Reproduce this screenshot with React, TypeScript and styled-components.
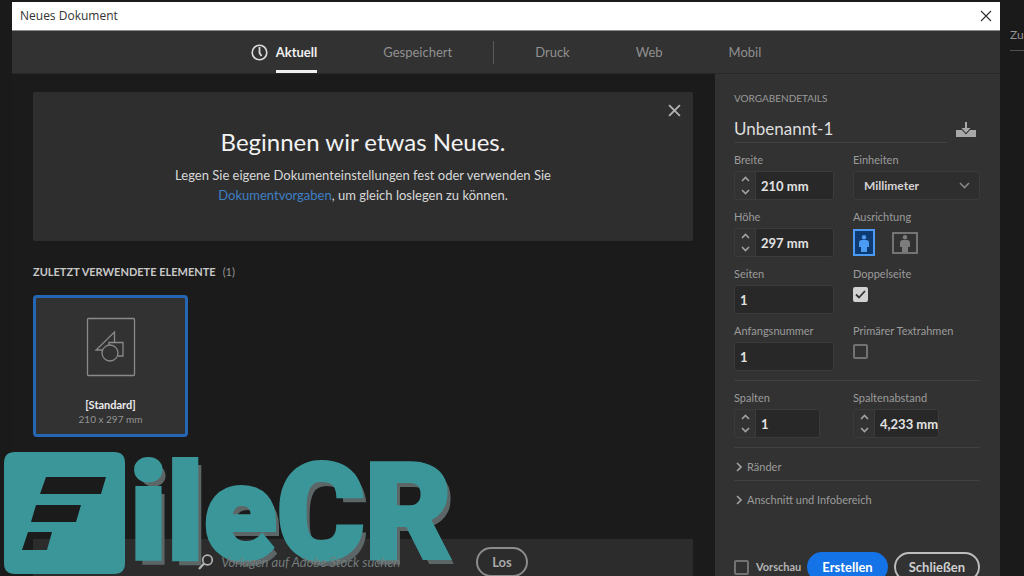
import React from "react";
import styled, { createGlobalStyle } from "styled-components";

const GlobalStyle = createGlobalStyle`
  * { box-sizing: border-box; }
  body {
    margin: 0;
    background: #1a1a1a;
    color: #d8d8d8;
    font-family: Lato, "Liberation Sans", sans-serif;
    font-size: 12px;
    line-height: 16px;
  }
  button, input, select { font: inherit; color: inherit; }
  button { cursor: pointer; }
  svg { display: block; flex: none; }
`;

const Page = styled.div`
  position: relative;
  display: flex;
  align-items: flex-start;
  height: 100vh;
  overflow: hidden;
  padding: 2px 0 0 12px;
`;

const Dialog = styled.section`
  flex: 1;
  min-width: 0;
  background: #1b1b1b;
`;

const Backdrop = styled.aside`
  width: 24px;
  padding: 25px 0 0 10px;
  overflow: hidden;
`;

const BackdropItem = styled.div`
  padding-bottom: 7px;
  border-bottom: 1px solid #505050;
  color: #949494;
  white-space: nowrap;
`;

const TitleBar = styled.header`
  display: flex;
  align-items: center;
  justify-content: space-between;
  height: 29px;
  padding: 0 8px;
  border-bottom: 1px solid #8a8a8a;
  background: #fff;
  color: #333;
`;

const WindowTitle = styled.h1`
  margin: 0;
  font: 400 12px/16px "Open Sans", sans-serif;
`;

const IconButton = styled.button`
  display: flex;
  align-items: center;
  justify-content: center;
  padding: 0;
  border: 0;
  background: none;
`;

const Tabs = styled.nav`
  display: flex;
  align-items: stretch;
  justify-content: center;
  gap: 66px;
  height: 43px;
  border-bottom: 1px solid #272727;
  background: #323232;
`;

const TabGroup = styled.div`
  display: flex;
  gap: 8px;
  align-items: center;
`;

const Tab = styled.button<{ $active?: boolean }>`
  height: 42px;
  padding: 3px 0 0;
  border: 0;
  border-bottom: 3px solid ${(p) => (p.$active ? "#f0f0f0" : "transparent")};
  background: none;
  color: ${(p) => (p.$active ? "#f0f0f0" : "#909090")};
  font-size: 13px;
  font-weight: ${(p) => (p.$active ? 700 : 400)};
`;

const TabDivider = styled.span`
  align-self: center;
  width: 1px;
  height: 23px;
  margin: 0 -25px;
  background: #5a5a5a;
`;

const Body = styled.div`
  display: flex;
`;

const Main = styled.main`
  flex: 1;
  min-width: 0;
  padding: 18px 22px 0 21px;
`;

const Hero = styled.section`
  position: relative;
  padding: 34px 20px 36px;
  border-radius: 2px;
  background: #2e2e2e;
  text-align: center;
`;

const HeroClose = styled(IconButton)`
  position: absolute;
  top: 12px;
  right: 12px;
`;

const HeroTitle = styled.h2`
  margin: 0 0 7px;
  color: #f2f2f2;
  font-size: 24px;
  font-weight: 400;
  line-height: 32px;
`;

const HeroText = styled.p`
  max-width: 400px;
  margin: 0 auto;
  font-size: 13px;
  line-height: 20px;
`;

const Link = styled.a`
  color: #3f7fc4;
  text-decoration: none;
`;

const SectionTitle = styled.h3`
  margin: 23px 0 15px;
  color: #c8c8c8;
  font-size: 11px;
  font-weight: 700;
  line-height: 16px;
`;

const Count = styled.span`
  margin-left: 7px;
  color: #969696;
  font-weight: 400;
`;

const PresetCard = styled.button`
  display: flex;
  flex-direction: column;
  align-items: center;
  width: 155px;
  height: 142px;
  padding: 19px 0 0;
  border: 3px solid #2567b5;
  border-radius: 4px;
  background: #323232;
  font-size: 11px;
  line-height: 15px;
`;

const PresetName = styled.span`
  margin-top: 20px;
  color: #ececec;
  font-weight: 700;
`;

const PresetSize = styled.span`
  color: #949494;
  font-size: 10px;
`;

const SearchBar = styled.form`
  display: flex;
  align-items: center;
  justify-content: center;
  height: 46px;
  margin-top: 102px;
  background: #2c2c2c;
`;

const SearchField = styled.label`
  position: relative;
  z-index: 2;
  display: flex;
  align-items: center;
  gap: 7px;
`;

const SearchInput = styled.input`
  width: 255px;
  padding: 0;
  border: 0;
  background: none;
  font-size: 13px;
  font-style: italic;
  &::placeholder { color: #747b7b; opacity: 1; }
`;

const PillButton = styled.button<{ $primary?: boolean }>`
  height: 30px;
  padding: 0 12px;
  border: 2px solid ${(p) => (p.$primary ? "#1473e6" : "#bdbdbd")};
  border-radius: 15px;
  background: ${(p) => (p.$primary ? "#1473e6" : "transparent")};
  color: ${(p) => (p.$primary ? "#fff" : "#cfcfcf")};
  font-size: 13px;
  font-weight: 700;
`;

const SearchButton = styled(PillButton)`
  padding: 0 14px;
  border-color: #8c8c8c;
  color: #a8a8a8;
`;

const Panel = styled.form`
  width: 285px;
  padding: 16px 20px 0 19px;
  background: #323232;
`;

const PanelTitle = styled.h3`
  margin: 0 0 11px;
  color: #9b9b9b;
  font-size: 10px;
  font-weight: 400;
  line-height: 16px;
`;

const NameRow = styled.div`
  display: flex;
  align-items: center;
  gap: 8px;
  margin-bottom: 9px;
  padding-right: 3px;
`;

const NameInput = styled.input`
  flex: 1;
  min-width: 0;
  height: 26px;
  padding: 0 0 3px;
  border: 0;
  border-bottom: 1px solid #414141;
  background: none;
  color: #dedede;
  font-size: 17px;
`;

const Grid = styled.div`
  display: grid;
  grid-template-columns: 100px 1fr;
  gap: 9px 19px;
`;

const Field = styled.div`
  display: flex;
  flex-direction: column;
  align-items: flex-start;
  gap: 3px;
  min-width: 0;
`;

const FieldLabel = styled.label`
  color: #9b9b9b;
  font-size: 11px;
  line-height: 16px;
`;

const NumberBox = styled.div<{ $width: number }>`
  display: flex;
  width: ${(p) => p.$width}px;
  height: 29px;
  border: 1px solid #3b3b3b;
  border-radius: 3px;
  overflow: hidden;
`;

const Stepper = styled.div`
  display: flex;
  flex-direction: column;
  width: 21px;
  border-right: 1px solid #3b3b3b;
`;

const StepButton = styled(IconButton)`
  flex: 1;
`;

const NumberInput = styled.input`
  flex: 1;
  min-width: 0;
  padding: 0 0 0 5px;
  border: 0;
  background: #282828;
  color: #e2e2e2;
  font-size: 13px;
  font-weight: 700;
`;

const SelectBox = styled.div`
  display: grid;
  align-items: center;
  width: 100%;
  & > * { grid-area: 1 / 1; }
  & > svg { justify-self: end; margin-right: 10px; pointer-events: none; }
`;

const Select = styled.select`
  width: 100%;
  height: 29px;
  padding: 0 10px;
  appearance: none;
  border: 1px solid #3b3b3b;
  border-radius: 3px;
  background: #2e2e2e;
  color: #d4d4d4;
  font-size: 12px;
  font-weight: 700;
`;

const Orientation = styled.div`
  display: flex;
  align-items: center;
  gap: 17px;
  height: 29px;
`;

const CheckWrap = styled.span`
  display: grid;
  & > * { grid-area: 1 / 1; }
  & > svg { place-self: center; pointer-events: none; }
`;

const CheckInput = styled.input`
  width: 15px;
  height: 15px;
  margin: 0;
  appearance: none;
  border: 2px solid #727272;
  border-radius: 2px;
  &:checked { border-color: #d2d2d2; background: #d2d2d2; }
`;

const CheckField = styled(Field)`
  & > ${CheckWrap} { margin-top: 2px; }
`;

const Rule = styled.hr`
  height: 1px;
  margin: 9px 0;
  border: 0;
  background: #414141;
`;

const Disclosure = styled.button`
  display: flex;
  align-items: center;
  gap: 5px;
  width: 100%;
  height: 20px;
  padding: 0 2px;
  border: 0;
  background: none;
  color: #9b9b9b;
  font-size: 11px;
`;

const Disclosures = styled.div`
  display: flex;
  flex-direction: column;
  & > hr { margin: 3px 0 9px; }
`;

const Footer = styled.footer`
  display: flex;
  align-items: center;
  gap: 6px;
  margin-top: 42px;
  & > button { flex: 1 1 auto; }
`;

const PreviewLabel = styled.label`
  display: flex;
  align-items: center;
  gap: 7px;
  color: #b4b4b4;
  font-size: 11px;
  font-weight: 700;
`;

const Watermark = styled.div`
  position: absolute;
  z-index: 1;
  left: 4px;
  top: 452px;
  display: flex;
  align-items: flex-start;
  gap: 4px;
  pointer-events: none;
`;

const WatermarkText = styled.span`
  color: #3b969a;
  font: 900 134px/124px Roboto, sans-serif;
  -webkit-text-stroke: 4px #3b969a;
  text-shadow: 5px 6px 0 #5c6666;
`;

const Cross = ({ size, color, weight }: { size: number; color: string; weight: number }) => (
  <svg width={size} height={size} viewBox="0 0 12 12" stroke={color} strokeWidth={weight} fill="none">
    <path d="M1 1l10 10M11 1L1 11" />
  </svg>
);

const Chevron = ({ d, w, h, color = "#a2a2a2" }: { d: string; w: number; h: number; color?: string }) => (
  <svg width={w} height={h} viewBox={`0 0 ${w} ${h}`} fill="none" stroke={color} strokeWidth="1.6">
    <path d={d} />
  </svg>
);

const Person = ({ x, y }: { x: number; y: number }) => (
  <g transform={`translate(${x} ${y})`}>
    <circle cx="5" cy="2.2" r="2.2" />
    <path d="M3 5h4q3 0 3 3v4H8v5H2v-5H0V8q0-3 3-3z" />
  </g>
);

const Check = ({ id, checked }: { id: string; checked?: boolean }) => (
  <CheckWrap>
    <CheckInput type="checkbox" id={id} defaultChecked={checked} />
    {checked && (
      <svg width="11" height="9" viewBox="0 0 11 9" fill="none" stroke="#333" strokeWidth="1.8">
        <path d="M1 4.5l3 3L10 1" />
      </svg>
    )}
  </CheckWrap>
);

type NumberFieldProps = { id: string; label: string; value: string; width?: number; stepper?: boolean };

const NumberField = ({ id, label, value, width = 100, stepper }: NumberFieldProps) => (
  <Field>
    <FieldLabel htmlFor={id}>{label}</FieldLabel>
    <NumberBox $width={width}>
      {stepper && (
        <Stepper>
          <StepButton type="button" aria-label={`${label} erhöhen`}>
            <Chevron d="M1 5l3.500-3.500L8 5" w={9} h={6} />
          </StepButton>
          <StepButton type="button" aria-label={`${label} verringern`}>
            <Chevron d="M1 1l3.500 3.500L8 1" w={9} h={6} />
          </StepButton>
        </Stepper>
      )}
      <NumberInput id={id} defaultValue={value} />
    </NumberBox>
  </Field>
);

export default function App() {
  return (
    <Page>
      <GlobalStyle />
      <Dialog>
        <TitleBar>
          <WindowTitle>Neues Dokument</WindowTitle>
          <IconButton aria-label="Fenster schließen">
            <Cross size={12} color="#333" weight={1.2} />
          </IconButton>
        </TitleBar>
        <Tabs>
          <TabGroup>
            <svg width="17" height="17" viewBox="0 0 17 17" fill="none" stroke="#dcdcdc">
              <circle cx="8.500" cy="8.500" r="7.300" strokeWidth="1.600" />
              <path d="M8.500 3v6l2 3" strokeWidth="1.800" />
            </svg>
            <Tab $active>Aktuell</Tab>
          </TabGroup>
          <Tab>Gespeichert</Tab>
          <TabDivider />
          <Tab>Druck</Tab>
          <Tab>Web</Tab>
          <Tab>Mobil</Tab>
        </Tabs>
        <Body>
          <Main>
            <Hero>
              <HeroClose aria-label="Hinweis schließen">
                <Cross size={13} color="#b0b0b0" weight={1.8} />
              </HeroClose>
              <HeroTitle>Beginnen wir etwas Neues.</HeroTitle>
              <HeroText>
                Legen Sie eigene Dokumenteinstellungen fest oder verwenden Sie{" "}
                <Link href="#vorgaben">Dokumentvorgaben</Link>, um gleich loslegen zu können.
              </HeroText>
            </Hero>
            <SectionTitle>
              ZULETZT VERWENDETE ELEMENTE<Count>(1)</Count>
            </SectionTitle>
            <PresetCard>
              <svg width="50" height="60" viewBox="0 0 50 60" fill="none" stroke="#8a8a8a" strokeWidth="1.300">
                <rect x="1.500" y="1.500" width="47" height="57" rx="1" />
                <path d="M17 33H10L28.500 15v10" />
                <path d="M23 28v-2.500h14v13.500h-5" />
                <circle cx="24" cy="36" r="8" />
              </svg>
              <PresetName>[Standard]</PresetName>
              <PresetSize>210 x 297 mm</PresetSize>
            </PresetCard>
            <SearchBar>
              <SearchField>
                <svg width="16" height="16" viewBox="0 0 16 16" fill="none" stroke="#b4b4b4" strokeWidth="1.700">
                  <circle cx="9.500" cy="6" r="4.800" />
                  <path d="M6 9.500L1 15" strokeWidth="2.200" />
                </svg>
                <SearchInput aria-label="Suche" placeholder="Vorlagen auf Adobe Stock suchen" />
              </SearchField>
              <SearchButton type="button">Los</SearchButton>
            </SearchBar>
          </Main>
          <Panel>
            <PanelTitle>VORGABENDETAILS</PanelTitle>
            <NameRow>
              <NameInput aria-label="Name" defaultValue="Unbenannt-1" />
              <IconButton type="button" aria-label="Vorgabe speichern">
                <svg width="22" height="16" viewBox="0 0 22 16" fill="#a8a8a8">
                  <path d="M1 8h20v7H1z" />
                  <path d="M10 0h2v6h3.500L11 11 6.500 6H10z" stroke="#323232" strokeWidth="2" paintOrder="stroke" />
                </svg>
              </IconButton>
            </NameRow>
            <Grid>
              <NumberField id="breite" label="Breite" value="210 mm" stepper />
              <Field>
                <FieldLabel htmlFor="einheiten">Einheiten</FieldLabel>
                <SelectBox>
                  <Select id="einheiten">
                    <option>Millimeter</option>
                  </Select>
                  <Chevron d="M1 1l4.500 4.500L10 1" w={11} h={7} color="#858585" />
                </SelectBox>
              </Field>
              <NumberField id="hoehe" label="Höhe" value="297 mm" stepper />
              <Field>
                <FieldLabel as="span">Ausrichtung</FieldLabel>
                <Orientation>
                  <IconButton type="button" aria-label="Hochformat" aria-pressed="true">
                    <svg width="22" height="27" viewBox="0 0 22 27" fill="#4b9bf5">
                      <rect x="1" y="1" width="20" height="25" fill="#0d3a70" stroke="#4b9bf5" strokeWidth="2" />
                      <Person x={6} y={6} />
                    </svg>
                  </IconButton>
                  <IconButton type="button" aria-label="Querformat" aria-pressed="false">
                    <svg width="26" height="22" viewBox="0 0 26 22" fill="#7c7c7c">
                      <rect x="1" y="1" width="24" height="20" fill="none" stroke="#7c7c7c" strokeWidth="1.800" />
                      <Person x={8} y={3} />
                    </svg>
                  </IconButton>
                </Orientation>
              </Field>
              <NumberField id="seiten" label="Seiten" value="1" />
              <CheckField>
                <FieldLabel htmlFor="doppelseite">Doppelseite</FieldLabel>
                <Check id="doppelseite" checked />
              </CheckField>
              <NumberField id="anfang" label="Anfangsnummer" value="1" />
              <CheckField>
                <FieldLabel htmlFor="textrahmen">Primärer Textrahmen</FieldLabel>
                <Check id="textrahmen" />
              </CheckField>
            </Grid>
            <Rule />
            <Grid>
              <NumberField id="spalten" label="Spalten" value="1" width={86} stepper />
              <NumberField id="abstand" label="Spaltenabstand" value="4,233 mm" width={86} stepper />
            </Grid>
            <Rule />
            <Disclosures>
              <Disclosure type="button">
                <Chevron d="M1 1l4 4L1 9" w={6} h={10} />
                Ränder
              </Disclosure>
              <Rule />
              <Disclosure type="button">
                <Chevron d="M1 1l4 4L1 9" w={6} h={10} />
                Anschnitt und Infobereich
              </Disclosure>
            </Disclosures>
            <Footer>
              <PreviewLabel htmlFor="vorschau">
                <Check id="vorschau" />
                Vorschau
              </PreviewLabel>
              <PillButton type="button" $primary>Erstellen</PillButton>
              <PillButton type="button">Schließen</PillButton>
            </Footer>
          </Panel>
        </Body>
      </Dialog>
      <Backdrop>
        <BackdropItem>Zu</BackdropItem>
      </Backdrop>
      <Watermark>
        <svg width="122" height="122" viewBox="0 0 122 122" fill="#3b969a" fillRule="evenodd">
          <path d="M11 0h99q11 0 11 11v100q0 11-11 11H11q-11 0-11-11V11Q0 0 11 0zM42 25l-6 17h61l5-17zM32 53l-5 17h45l5-17zM24 80l-6 18h25l5-18z" />
        </svg>
        <WatermarkText>ileCR</WatermarkText>
      </Watermark>
    </Page>
  );
}
